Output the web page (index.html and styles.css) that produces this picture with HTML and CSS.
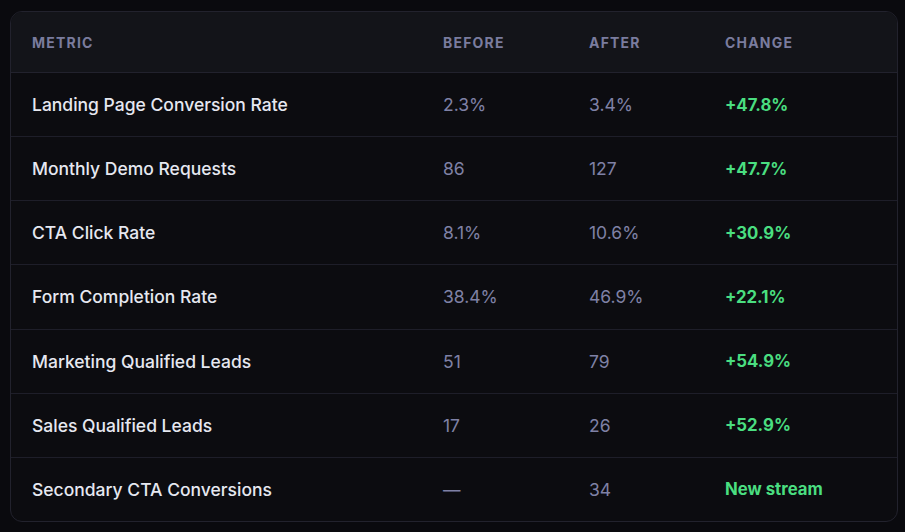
FILE: index.html
```html
<!DOCTYPE html>
<html lang="en">
<head>
<meta charset="utf-8">
<title>Metrics</title>
<link rel="stylesheet" href="styles.css">
</head>
<body>
<div class="card">
  <table class="metrics">
    <colgroup>
      <col class="c-metric"><col class="c-before"><col class="c-after"><col class="c-change">
    </colgroup>
    <thead>
      <tr><th>Metric</th><th>Before</th><th>After</th><th>Change</th></tr>
    </thead>
    <tbody>
      <tr><td class="name">Landing Page Conversion Rate</td><td class="val">2.3%</td><td class="val">3.4%</td><td class="chg">+47.8%</td></tr>
      <tr><td class="name">Monthly Demo Requests</td><td class="val">86</td><td class="val">127</td><td class="chg">+47.7%</td></tr>
      <tr><td class="name">CTA Click Rate</td><td class="val">8.1%</td><td class="val">10.6%</td><td class="chg">+30.9%</td></tr>
      <tr><td class="name">Form Completion Rate</td><td class="val">38.4%</td><td class="val">46.9%</td><td class="chg">+22.1%</td></tr>
      <tr><td class="name">Marketing Qualified Leads</td><td class="val">51</td><td class="val">79</td><td class="chg">+54.9%</td></tr>
      <tr><td class="name">Sales Qualified Leads</td><td class="val">17</td><td class="val">26</td><td class="chg">+52.9%</td></tr>
      <tr><td class="name">Secondary CTA Conversions</td><td class="val">—</td><td class="val">34</td><td class="chg">New stream</td></tr>
    </tbody>
  </table>
</div>
</body>
</html>
```
FILE: styles.css
```css
html, body {
  margin: 0;
  padding: 0;
  background: #0a0a0e;
}
body {
  padding: 11px 7px 0 10px;
  font-family: Inter, "Noto Sans", sans-serif;
}
.card {
  width: 886px;
  border: 1px solid #22222d;
  border-radius: 12px;
  background: #0c0c10;
  overflow: hidden;
}
.metrics {
  width: 100%;
  border-collapse: collapse;
  table-layout: fixed;
}
.c-metric { width: 411px; }
.c-before { width: 146px; }
.c-after { width: 136px; }
.c-change { width: auto; }
.metrics thead tr {
  background: #131419;
}
.metrics th {
  height: 60px;
  padding: 0 0 0 21px;
  text-align: left;
  font-size: 14px;
  font-weight: 700;
  letter-spacing: 1.2px;
  text-transform: uppercase;
  color: #7a7c9e;
  border-bottom: 1px solid #22222d;
}
.metrics td {
  height: 63.15px;
  padding: 0 0 0 21px;
  font-size: 17.5px;
  border-bottom: 1px solid #1e1e29;
}
.metrics tbody tr:last-child td {
  border-bottom: none;
}
.name {
  color: #e6e8f0;
  font-weight: 500;
}
.val {
  color: #7f81a5;
  font-weight: 400;
}
.metrics td.chg {
  color: #4ade80;
  font-weight: 700;
  font-size: 16.75px;
}
```
